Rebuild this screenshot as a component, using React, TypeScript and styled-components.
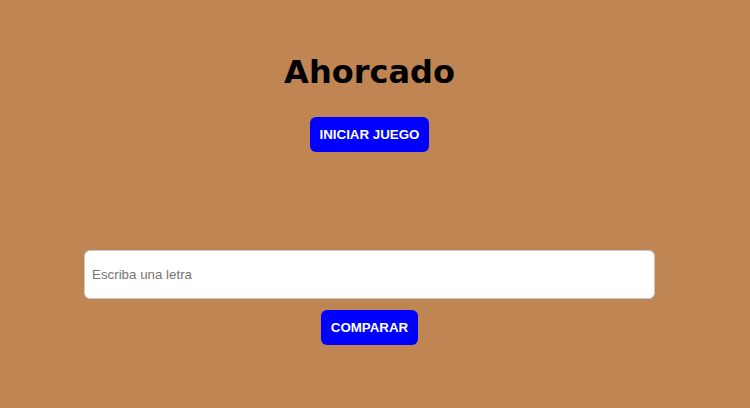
import styled, { createGlobalStyle } from "styled-components";

const GlobalStyle = createGlobalStyle`
  html, body {
    margin: 0;
    padding: 0;
    background: #bf8553;
    height: 100%;
  }
`;

const Page = styled.main`
  display: flex;
  flex-direction: column;
  align-items: center;
  padding: 54px 11px 0 0;
  min-height: 408px;
  box-sizing: border-box;
  background: #bf8553;
`;

const Title = styled.h1`
  margin: 0;
  font-family: "DejaVu Sans", Verdana, sans-serif;
  font-size: 32px;
  font-weight: bold;
  line-height: 37px;
  color: #000;
`;

const Button = styled.button<{ $top: number }>`
  margin-top: ${({ $top }) => $top}px;
  height: 35px;
  padding: 0 10px;
  border: none;
  border-radius: 6px;
  background: #0000ff;
  color: #fff;
  font-family: "Liberation Sans", Arial, sans-serif;
  font-size: 13.33px;
  font-weight: bold;
  cursor: pointer;
`;

const LetterInput = styled.input`
  margin-top: 98px;
  width: 571px;
  height: 49px;
  box-sizing: border-box;
  padding: 0 7px;
  border: 1px solid #c8c8c8;
  border-radius: 6px;
  background: #fff;
  font-family: "Liberation Sans", Arial, sans-serif;
  font-size: 13.33px;
  color: #000;
  outline: none;

  &::placeholder {
    color: #757575;
  }
`;

export default function App() {
  return (
    <>
      <GlobalStyle />
      <Page>
        <Title>Ahorcado</Title>
        <Button $top={26}>INICIAR JUEGO</Button>
        <LetterInput placeholder="Escriba una letra" />
        <Button $top={11}>COMPARAR</Button>
      </Page>
    </>
  );
}
